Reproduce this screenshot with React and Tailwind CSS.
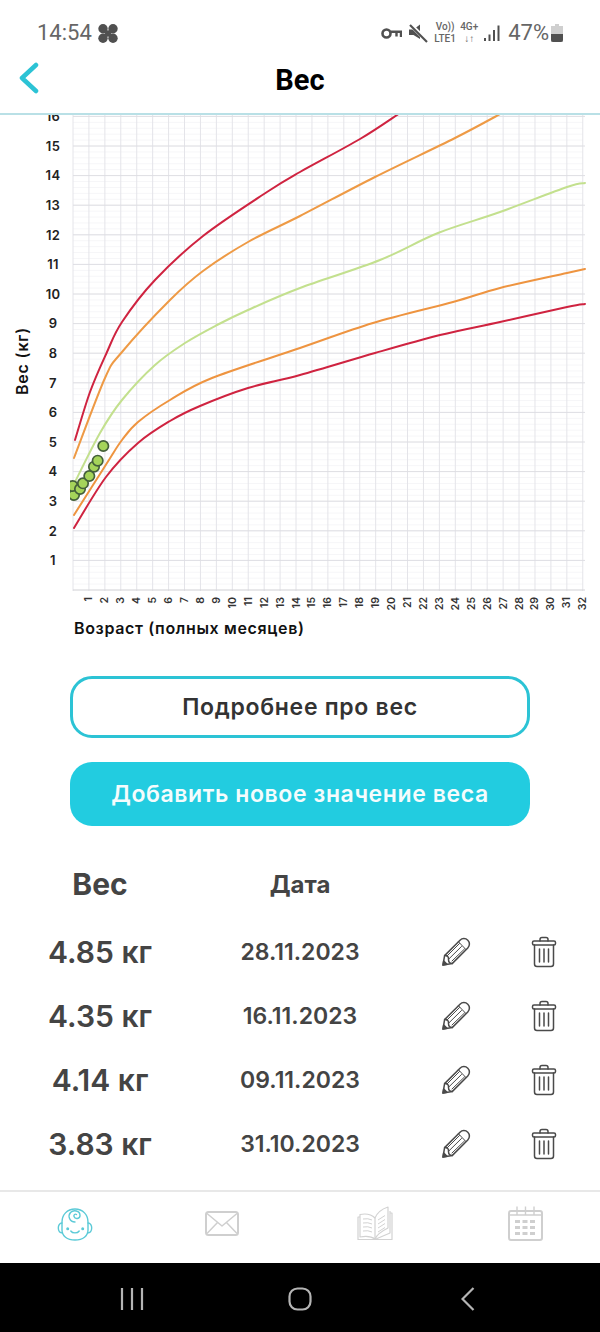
const F = "Inter, 'Noto Sans', sans-serif";
const X = (m) => 73 + m * 15.93;
const Y = (v) => 590 - 29.6 * v;

const curves = [
  { c: "#cf2340", p: "75,440 90,392 107,352 122,322 155,280 203,236 267,192 300,172 360,139 400,113" },
  { c: "#ee9a45", p: "74,458 105,378 122,352 170,300 203,271 248,242 300,216 375,177 455,138 502,113" },
  { c: "#c3e08e", p: "74,484 100,433 122,400 155,365 185,343 217,325 248,310 300,288 380,260 438,233 500,212 567,187 585,183" },
  { c: "#ee9440", p: "74,515 107,463 122,440 138,422 170,400 212,378 300,348 373,323 453,302 500,288 567,273 585,269" },
  { c: "#cf2340", p: "74,528 106,477 138,443 170,421 200,406 248,388 300,375 375,353 440,335 500,322 567,307 585,304" },
];
const dots = [[74, 495], [72.7, 486], [80, 489], [83, 483.3], [89.3, 476], [94, 466.7], [97.7, 460.7], [103.3, 446]];

function smooth(str) {
  const pts = str.split(" ").map((s) => s.split(",").map(Number));
  let d = `M${pts[0][0]} ${pts[0][1]}`;
  for (let i = 0; i < pts.length - 1; i++) {
    const a = pts[Math.max(i - 1, 0)];
    const b = pts[i];
    const c = pts[i + 1];
    const e = pts[Math.min(i + 2, pts.length - 1)];
    const c1 = [b[0] + (c[0] - a[0]) / 6, b[1] + (c[1] - a[1]) / 6];
    const c2 = [c[0] - (e[0] - b[0]) / 6, c[1] - (e[1] - b[1]) / 6];
    d += ` C${c1[0].toFixed(1)} ${c1[1].toFixed(1)} ${c2[0].toFixed(1)} ${c2[1].toFixed(1)} ${c[0]} ${c[1]}`;
  }
  return d;
}

function Chart() {
  return (
    <svg width="600" height="530" viewBox="0 115 600 530" className="block">
      <defs>
        <clipPath id="dotclip"><rect x="70" y="115" width="520" height="480" /></clipPath>
      </defs>
      {Array.from({ length: 81 }, (_, i) => (
        <line key={i} x1="73" x2="583" y1={590 - i * 5.92} y2={590 - i * 5.92} stroke="#f6f6f8" strokeWidth="1" />
      ))}
      {Array.from({ length: 33 }, (_, i) => (
        <line key={i} x1={X(i)} x2={X(i)} y1="113" y2="591" stroke="#e4e4e9" strokeWidth="1" />
      ))}
      {Array.from({ length: 16 }, (_, i) => (
        <line key={i} x1="73" x2="585" y1={Y(i + 1)} y2={Y(i + 1)} stroke="#dedee3" strokeWidth="1" />
      ))}
      <line x1="73" x2="585" y1="590" y2="590" stroke="#d4d4d8" strokeWidth="1" />
      {curves.map((k, i) => (
        <path key={i} d={smooth(k.p)} fill="none" stroke={k.c} strokeWidth="2" strokeLinecap="round" />
      ))}
      <g clipPath="url(#dotclip)">
        {dots.map(([x, y], i) => (
          <circle key={i} cx={x} cy={y} r="5.2" fill="#a5d45a" stroke="#44603a" strokeWidth="1.7" />
        ))}
      </g>
      {Array.from({ length: 16 }, (_, i) => (
        <text key={i} x="53" y={Y(i + 1) + 4.7} textAnchor="middle" fontSize="13" fontWeight="600" fill="#222" letterSpacing="0.3" fontFamily={F}>{i + 1}</text>
      ))}
      {Array.from({ length: 32 }, (_, i) => (
        <text key={i} transform={`translate(${X(i + 1) + 3.5} 597) rotate(-90)`} textAnchor="end" fontSize="10.5" fontWeight="600" fill="#333" fontFamily={F}>{i + 1}</text>
      ))}
      <text transform="translate(28 361) rotate(-90)" textAnchor="middle" fontSize="16" fontWeight="600" fill="#111" letterSpacing="0.8" fontFamily={F}>Вес (кг)</text>
      <text x="74" y="634" fontSize="16" fontWeight="600" fill="#111" letterSpacing="0.65" fontFamily={F}>Возраст (полных месяцев)</text>
    </svg>
  );
}

function Pencil() {
  return (
    <svg width="30" height="30" viewBox="0 0 30 30" fill="none" stroke="#4a4a4a" strokeWidth="1.5" strokeLinejoin="round" strokeLinecap="round">
      <path d="M2 28 L3.6 18.6 L19 3.2 A5.5 5.5 0 0 1 26.8 11 L11.4 26.4 Z" />
      <path d="M3.6 18.6 Q8 18.5 7.5 22.5 Q7.5 26.5 11.4 26.4" />
      <path d="M8 21.8 L20.5 9.5 M11 24 L23.5 12 M6 19 L18.5 6.5 M17.5 4.8 L25 12.6" strokeWidth="1" />
      <path d="M2 28 L2.7 24 L6 27.3 Z" fill="#4a4a4a" />
    </svg>
  );
}

function Trash() {
  return (
    <svg width="26" height="32" viewBox="0 0 26 32" fill="none" stroke="#4a4a4a" strokeWidth="1.5" strokeLinejoin="round" strokeLinecap="round">
      <path d="M9 5 V3.5 Q9 1.5 11 1.5 H15 Q17 1.5 17 3.5 V5" />
      <rect x="1.5" y="5" width="23" height="4" rx="1.5" />
      <path d="M3.5 9 V28 Q3.5 30.5 6 30.5 H20 Q22.5 30.5 22.5 28 V9" />
      <path d="M8.5 13 V26 M13 13 V26 M17.5 13 V26" />
    </svg>
  );
}

function Baby() {
  return (
    <svg width="38" height="34" viewBox="0 0 38 34" fill="none" stroke="#5bcad7" strokeWidth="1.4" strokeLinecap="round" strokeLinejoin="round">
      <path d="M19 2 C11 2 6 8 6 15 V23 C6 29 11 33 19 33 C27 33 32 29 32 23 V15 C32 8 27 2 19 2 Z" />
      <path d="M6 16 C1 16 1 26 6.5 26 M32 16 C37 16 37 26 31.5 26" />
      <path d="M19 15 C13.5 15 11.5 9 14.5 5.5 C17.5 2.5 24 3.5 24 8.5 C24 12 19 12.5 18 9.5 C17.5 8 19 6.5 20.5 7.5" />
      <path d="M14.8 24 C16.5 26.5 21.5 26.5 23.2 24" />
      <circle cx="11.7" cy="21.7" r="0.8" fill="#5bcad7" />
      <circle cx="26.7" cy="21.7" r="0.8" fill="#5bcad7" />
    </svg>
  );
}

function Mail() {
  return (
    <svg width="34" height="25" viewBox="0 0 34 25" fill="none" stroke="#cfcfcf" strokeWidth="2" strokeLinejoin="round">
      <rect x="1" y="1" width="32" height="23" rx="2.5" />
      <path d="M2 2.5 L17 15 L32 2.5 M2 22.5 L12.5 11.5 M32 22.5 L21.5 11.5" strokeWidth="1.5" />
    </svg>
  );
}

function Book() {
  return (
    <svg width="36" height="35" viewBox="0 0 36 35" fill="none" stroke="#d2d2d2" strokeWidth="1.2" strokeLinejoin="round">
      <path d="M18 12 C14 8 8 7.5 3 8.5 V31 C8 30 14 30 18 33 C20 28 25 25 31 22 V1 C25 3 20 7 18 12 Z" />
      <path d="M18 12 V33" />
      <path d="M3 11 H1 V33.5 H35 V7 H33 M1 33.5 H35" />
      <path d="M33 5 V27 L19 33" />
      <path d="M6 13 Q11 12 15 14 M6 17 Q11 16 15 18 M6 21 Q11 20 15 22 M6 25 Q11 24 15 26 M21 14 L28 9.5 M21 18 L28 13.5 M21 22 L28 17.5 M21 26 L28 21.5" strokeWidth="1" />
    </svg>
  );
}

function Calendar() {
  return (
    <svg width="35" height="35" viewBox="0 0 35 35" fill="none" stroke="#cfcfcf" strokeWidth="2" strokeLinejoin="round">
      <rect x="1" y="5" width="33" height="29" rx="2" />
      <path d="M9 0.5 V9 M17.5 0.5 V9 M26 0.5 V9 M1 9 H34" strokeWidth="1.4" />
      <g fill="#cfcfcf" stroke="none">
        {[14, 20, 26].map((y) => [7, 14.5, 22].map((x) => <rect key={`${x}-${y}`} x={x} y={y} width="5" height="3" />))}
      </g>
    </svg>
  );
}

function StatusBar() {
  return (
    <div className="h-[56px] flex items-center justify-between pl-[37px] pr-[37px] pt-[10px] text-[#666]" style={{ fontFamily: "Roboto, sans-serif" }}>
      <div className="flex items-center gap-[6px]">
        <span className="text-[22px] leading-none">14:54</span>
        <svg width="20" height="19" viewBox="0 0 20 19" fill="#505050">
          <circle cx="5" cy="4.8" r="4.7" /><circle cx="15" cy="4.8" r="4.7" /><circle cx="5" cy="14.2" r="4.7" /><circle cx="15" cy="14.2" r="4.7" />
          <path d="M5 5 L15 14 M15 5 L5 14" stroke="#505050" strokeWidth="4" />
        </svg>
      </div>
      <div className="flex items-center">
        <svg width="21" height="13" viewBox="0 0 21 13" fill="none" stroke="#505050" strokeWidth="2.6">
          <circle cx="5.5" cy="6.5" r="4" />
          <path d="M9.5 4.8 H20 V10 M15.5 4.8 V9.5" strokeWidth="2.4" />
        </svg>
        <svg className="ml-[6px]" width="20" height="20" viewBox="0 0 20 20" fill="#505050">
          <path d="M1 6.5 H5.5 L12 1.5 V16 L5.5 12 H1 Z" />
          <path d="M2 1 L19 18" stroke="#fff" strokeWidth="4" />
          <path d="M2 2 L19 19" stroke="#505050" strokeWidth="2.2" />
        </svg>
        <div className="ml-[6px] w-[22px] flex flex-col items-center text-[10px] leading-[12px] font-medium">
          <span>Vo))</span>
          <span>LTE1</span>
        </div>
        <div className="ml-[4px] w-[18px] flex flex-col items-center text-[10px] leading-[12px] font-medium">
          <span>4G+</span>
          <span>↓↑</span>
        </div>
        <svg className="ml-[6px]" width="16" height="17" viewBox="0 0 16 17" fill="#505050">
          <rect x="0" y="13" width="2" height="3" />
          <rect x="4.5" y="9.5" width="2" height="6.5" />
          <rect x="9" y="5" width="2" height="11" />
          <rect x="13.5" y="0.5" width="2" height="15.5" />
        </svg>
        <span className="ml-[8px] text-[22px] leading-none">47%</span>
        <svg className="ml-[2px]" width="12" height="18" viewBox="0 0 12 18">
          <path d="M4 0 H8 V2 H12 V18 H0 V2 H4 Z" fill="#cfcfcf" />
          <path d="M0 10 H12 V16 Q12 18 10 18 H2 Q0 18 0 16 Z" fill="#505050" />
        </svg>
      </div>
    </div>
  );
}

const rows = [
  ["4.85 кг", "28.11.2023"],
  ["4.35 кг", "16.11.2023"],
  ["4.14 кг", "09.11.2023"],
  ["3.83 кг", "31.10.2023"],
];

export default function App() {
  return (
    <div className="w-[600px] h-[1332px] bg-white flex flex-col overflow-hidden" style={{ fontFamily: F }}>
      <StatusBar />
      <header className="h-[59px] shrink-0 grid grid-cols-[1fr_auto_1fr] items-center border-b-2 border-[#b9e0e6]">
        <svg width="20" height="34" viewBox="0 0 20 34" fill="none" stroke="#2cc3d5" strokeWidth="4.5" strokeLinecap="round" strokeLinejoin="round" className="mb-[13px] ml-[19px]">
          <path d="M17 4 L3 17 L17 30" />
        </svg>
        <h1 className="text-[29px] font-bold text-black leading-none mb-[9px]" style={{ fontFamily: "Roboto, sans-serif" }}>Вес</h1>
        <div />
      </header>
      <main className="flex-1 min-h-0 overflow-hidden flex flex-col">
        <Chart />
        <div className="px-[70px] mt-[31px] flex flex-col gap-[24px]">
          <button className="h-[62px] rounded-[22px] border-[3px] border-[#2cc3d5] text-[23px] tracking-[0.7px] font-semibold text-[#333]">Подробнее про вес</button>
          <button className="h-[64px] rounded-[22px] bg-[#22cce0] text-[23px] tracking-[0.6px] font-semibold text-[#f4fcfd]">Добавить новое значение веса</button>
        </div>
        <div className="mt-[36px] mb-[18px] grid grid-cols-[200px_200px_112px_64px] items-center h-[40px] text-[#444]">
          <span className="text-center text-[30px] font-bold">Вес</span>
          <span className="text-center text-[24px] font-bold">Дата</span>
        </div>
        <div className="flex flex-col">
          {rows.map(([w, d]) => (
            <div key={d} className="grid grid-cols-[200px_200px_112px_64px] items-center h-[64px] text-[#444]">
              <span className="text-center text-[30px] font-semibold">{w}</span>
              <span className="text-center text-[23px] font-semibold">{d}</span>
              <span className="flex justify-center"><Pencil /></span>
              <span className="flex justify-center"><Trash /></span>
            </div>
          ))}
        </div>
      </main>
      <nav className="h-[73px] shrink-0 border-t-2 border-[#e8e8e8] grid grid-cols-4 items-center pb-[8px]">
        <span className="flex justify-center"><Baby /></span>
        <span className="flex justify-center pr-[6px]"><Mail /></span>
        <span className="flex justify-center"><Book /></span>
        <span className="flex justify-center"><Calendar /></span>
      </nav>
      <div className="h-[69px] shrink-0 bg-black flex items-center justify-center pt-[3px]">
        <div className="grid grid-cols-3 w-[504px] justify-items-center items-center">
          <svg width="24" height="22" viewBox="0 0 24 22" stroke="#b5b5b5" strokeWidth="2.2"><path d="M2 0 V22 M12 0 V22 M22 0 V22" /></svg>
          <svg width="24" height="24" viewBox="0 0 24 24" fill="none" stroke="#b5b5b5" strokeWidth="2.2"><rect x="1.5" y="1.5" width="21" height="21" rx="8" /></svg>
          <svg width="14" height="24" viewBox="0 0 14 24" fill="none" stroke="#b5b5b5" strokeWidth="2.2"><path d="M12.5 1 L1.5 12 L12.5 23" /></svg>
        </div>
      </div>
    </div>
  );
}
